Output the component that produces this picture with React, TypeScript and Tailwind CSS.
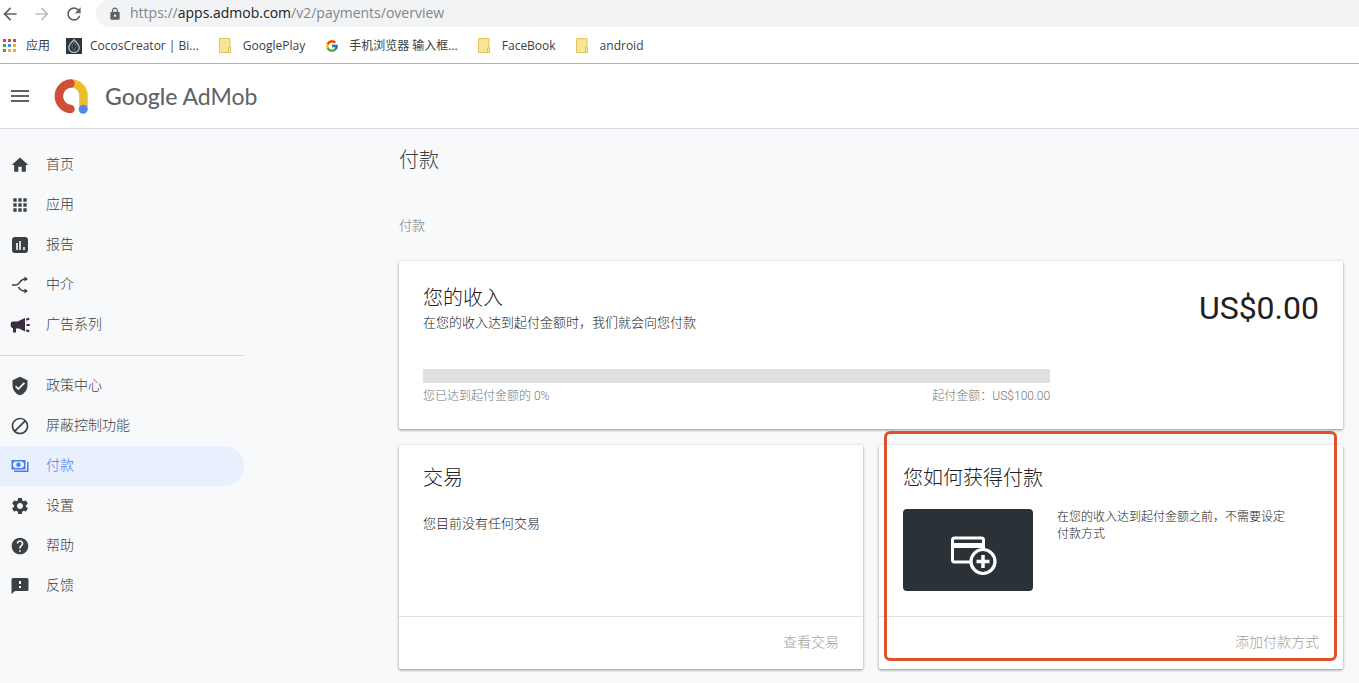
import type { ReactNode } from "react";
import {
  MdApps,
  MdArrowBack,
  MdArrowForward,
  MdBlock,
  MdHelp,
  MdHome,
  MdLock,
  MdMenu,
  MdRefresh,
  MdSettings,
  MdVerifiedUser,
} from "react-icons/md";
import { FcGoogle } from "react-icons/fc";

function ReportIcon() {
  return (
    <svg width={20} height={20} viewBox="0 0 20 20">
      <rect x="2" y="2" width="16" height="16" rx="3" fill="currentColor" />
      <path d="M7 8v7M10 6v9M14 12v3" stroke="#f8f9fb" strokeWidth="1.6" />
    </svg>
  );
}

function MediationIcon() {
  return (
    <svg width={20} height={20} viewBox="0 0 20 20" fill="none" stroke="currentColor" strokeWidth="1.6">
      <path d="M2 10h4c4 0 3.500-6 9-6M8.500 12c1.200 2.500 2.500 4 6.500 4" />
      <path d="M14.500 1.500L18 4l-3.500 2.500zM14.500 13.500L18 16l-3.500 2.500z" fill="currentColor" stroke="none" />
    </svg>
  );
}

function CampaignIcon() {
  return (
    <svg width={20} height={20} viewBox="0 0 20 20" fill="#3a2d40">
      <path d="M3 6.500h4.500L15 3v13.500l-6-3H6v4H3v-4.200A3 3 0 0 1 .7 11V8.800A2.300 2.300 0 0 1 3 6.500z" />
      <path d="M16.200 4.800l3-1.300M16.500 10h3.200M16.200 15.200l3 1.300" stroke="#3a2d40" strokeWidth="2" />
    </svg>
  );
}

function PaymentsIcon() {
  return (
    <svg width={20} height={20} viewBox="0 0 20 20" fill="currentColor">
      <path
        fillRule="evenodd"
        d="M1.500 4h14v9.500h-14zM4.500 5.500A1.800 1.800 0 0 1 3 7v3.500A1.800 1.800 0 0 1 4.500 12h8a1.800 1.800 0 0 1 1.500-1.500V7a1.800 1.800 0 0 1-1.500-1.500z"
      />
      <circle cx="8.500" cy="8.700" r="2.200" />
      <path d="M17 6h1.500v10H4v-1.500h13z" />
    </svg>
  );
}

function FeedbackIcon() {
  return (
    <svg width={20} height={20} viewBox="0 0 20 20">
      <path d="M3 2h14a1.500 1.500 0 0 1 1.500 1.500v10A1.500 1.500 0 0 1 17 15H5l-3.500 3V3.500A1.500 1.500 0 0 1 3 2z" fill="currentColor" />
      <path d="M9 5h2v3H9zM9 10h2v2H9z" fill="#f8f9fb" />
    </svg>
  );
}

function AppsColorIcon() {
  const colors = ["#db4437", "#db4437", "#db4437", "#4a9c5a", "#4285f4", "#e8b12d", "#4a9c5a", "#e8b12d", "#e8b12d"];
  return (
    <svg width={13} height={13} viewBox="0 0 13 13">
      {colors.map((color, i) => (
        <rect key={i} x={(i % 3) * 5} y={Math.floor(i / 3) * 5} width="3" height="3" fill={color} />
      ))}
    </svg>
  );
}

function CocosIcon() {
  return (
    <svg width={16} height={16} viewBox="0 0 16 16" fill="none">
      <rect width="16" height="16" fill="#2f363c" />
      <path d="M8 1.500C6 4 2.800 6.500 2.800 9.500c0 3 2.400 5 5.200 5s5.200-2 5.200-5C13.200 6.500 10 4 8 1.500z" stroke="#c9ced1" strokeWidth="1.200" />
      <path d="M8 3L5.800 8.500 8 12.500l2.200-4z" stroke="#8e969b" strokeWidth=".5" />
    </svg>
  );
}

function FolderIcon() {
  return (
    <svg width={13} height={15} viewBox="0 0 13 15">
      <path d="M.5.500h10.500v14H.500z" fill="#f8e698" stroke="#e3c65b" />
      <path d="M9.500 9.500h2v5h-2z" fill="#f8e698" stroke="#e3c65b" />
    </svg>
  );
}

function AdMobLogo() {
  return (
    <svg width={36} height={36} viewBox="0 0 36 36" fill="none">
      <path d="M18 5.500C25.500 5.500 30.500 11 30.500 18V31" stroke="#ecbd2c" strokeWidth="8.500" />
      <path d="M17.500 5.500a12.800 12.800 0 0 0 0 25.500" stroke="#cf4f3a" strokeWidth="8.500" strokeLinecap="round" />
      <circle cx="30.200" cy="31.200" r="4.500" fill="#5586f0" />
    </svg>
  );
}

function AddCardIcon() {
  return (
    <svg width={48} height={42} viewBox="0 0 48 42" fill="none" stroke="#fff">
      <rect x="2.500" y="3" width="31" height="24" rx="2" strokeWidth="3" />
      <path d="M2 10.500h32" strokeWidth="5" />
      <circle cx="33" cy="26.500" r="12" fill="#2a3238" strokeWidth="3.200" />
      <path d="M33 20v13M26.500 26.500h13" strokeWidth="3.500" />
    </svg>
  );
}

type Item = { label: string; icon: ReactNode; active?: boolean };

const bookmarks: Item[] = [
  { label: "CocosCreator | Bi...", icon: <CocosIcon /> },
  { label: "GooglePlay", icon: <FolderIcon /> },
  { label: "手机浏览器 输入框...", icon: <FcGoogle size={14} /> },
  { label: "FaceBook", icon: <FolderIcon /> },
  { label: "android", icon: <FolderIcon /> },
];

const mainItems: Item[] = [
  { label: "首页", icon: <MdHome size={20} /> },
  { label: "应用", icon: <MdApps size={20} /> },
  { label: "报告", icon: <ReportIcon /> },
  { label: "中介", icon: <MediationIcon /> },
  { label: "广告系列", icon: <CampaignIcon /> },
];

const moreItems: Item[] = [
  { label: "政策中心", icon: <MdVerifiedUser size={20} /> },
  { label: "屏蔽控制功能", icon: <MdBlock size={20} /> },
  { label: "付款", icon: <PaymentsIcon />, active: true },
  { label: "设置", icon: <MdSettings size={20} /> },
  { label: "帮助", icon: <MdHelp size={20} /> },
  { label: "反馈", icon: <FeedbackIcon /> },
];

function BrowserBar() {
  return (
    <div className="border-b border-[#b3b4b6] bg-white font-['Open_Sans','Noto_Sans_CJK_SC',sans-serif] font-normal">
      <div className="flex h-[27px] items-center">
        <div className="flex w-24 items-center gap-3 text-[#5f6368]">
          <button aria-label="Back"><MdArrowBack size={20} /></button>
          <button aria-label="Forward" className="text-[#bcbec1]"><MdArrowForward size={20} /></button>
          <button aria-label="Reload"><MdRefresh size={20} /></button>
        </div>
        <div className="flex h-full flex-1 items-center gap-2 rounded-l-full bg-[#f1f3f4] pl-3 text-[#5f6368]">
          <MdLock size={14} />
          <div className="pb-0.5 text-[14px] text-[#80868b]">
            https://<span className="text-[#202124]">apps.admob.com</span>/v2/payments/overview
          </div>
        </div>
      </div>
      <div className="flex h-9 items-center gap-5 pt-px pl-[3px] text-xs text-[#3c4043]">
        <a href="#" className="-mr-1 flex items-center gap-2.5">
          <AppsColorIcon />
          应用
        </a>
        {bookmarks.map((item) => (
          <a key={item.label} href="#" className="flex items-center gap-2 whitespace-nowrap">
            <span className="w-4">{item.icon}</span>
            {item.label}
          </a>
        ))}
      </div>
    </div>
  );
}

function NavList({ items }: { items: Item[] }) {
  return (
    <ul>
      {items.map((item) => (
        <li key={item.label}>
          <a
            href="#"
            className={`flex h-10 items-center gap-4 rounded-r-full pl-[10px] text-sm ${
              item.active ? "bg-[#e8effd] text-[#4a7ce8]" : "text-[#3c4043]"
            }`}
          >
            {item.icon}
            <span className="pb-0.5">{item.label}</span>
          </a>
        </li>
      ))}
    </ul>
  );
}

function Card({ title, action, children }: { title: string; action: string; children: ReactNode }) {
  return (
    <section className="flex min-h-56 flex-col rounded-xs bg-white shadow-[0_1px_3px_rgba(0,0,0,0.45)]">
      <div className="flex-1 px-6 pt-[19px]">
        <h2 className="text-xl leading-7">{title}</h2>
        {children}
      </div>
      <div className="flex h-[53px] items-center justify-end border-t border-[#e0e0e0] px-6 pb-0.5">
        <button className="text-sm text-[#9e9e9e]">{action}</button>
      </div>
    </section>
  );
}

export default function App() {
  return (
    <div className="flex min-h-screen flex-col bg-[#f8f9fb] font-['Roboto','Noto_Sans_CJK_SC',sans-serif] font-light text-[#212121]">
      <BrowserBar />
      <header className="flex h-[65px] items-center border-b border-[#dadce0] bg-white pl-2">
        <button aria-label="Menu" className="text-[#5f6368]">
          <MdMenu size={24} />
        </button>
        <a href="#" className="flex items-center gap-4 pl-[21px] text-[#5f6368]">
          <AdMobLogo />
          <span className="font-['Lato',sans-serif] text-[23px] font-normal">
            <span className="font-medium">Google</span> AdMob
          </span>
        </a>
      </header>
      <div className="flex flex-1">
        <nav className="w-[244px] shrink-0 pt-4">
          <NavList items={mainItems} />
          <hr className="my-[10px] border-[#dadce0]" />
          <NavList items={moreItems} />
        </nav>
        <main className="min-w-0 flex-1 pr-4 pb-3 pl-[155px]">
          <h1 className="pt-[15px] text-xl leading-8 text-[#3c4043]">付款</h1>
          <p className="pt-10 text-[13px] leading-5 text-[#757575]">付款</p>
          <section className="mt-[25px] flex min-h-[168px] justify-between rounded-xs bg-white px-6 pt-[23px] shadow-[0_1px_3px_rgba(0,0,0,0.45)]">
            <div className="w-[70%]">
              <h2 className="text-xl leading-7">您的收入</h2>
              <p className="text-[13px] leading-[22px]">在您的收入达到起付金额时，我们就会向您付款</p>
              <div role="progressbar" aria-label="起付金额" aria-valuenow={0} className="mt-[35px] h-[14px] bg-[#e0e0e0]" />
              <div className="flex justify-between pt-[5px] text-xs leading-4 text-[#757575]">
                <span>您已达到起付金额的 0%</span>
                <span>起付金额：US$100.00</span>
              </div>
            </div>
            <div className="pt-1 text-[32px] leading-10 font-normal">US$0.00</div>
          </section>
          <div className="mt-4 grid grid-cols-2 gap-4">
            <Card title="交易" action="查看交易">
              <p className="pt-[22px] text-[13px] leading-5">您目前没有任何交易</p>
            </Card>
            <div className="relative">
              <Card title="您如何获得付款" action="添加付款方式">
                <div className="flex gap-6 pt-[17px]">
                  <div className="flex h-[82px] w-[130px] shrink-0 items-center justify-center rounded-sm bg-[#2a3238] pt-3 pl-3">
                    <AddCardIcon />
                  </div>
                  <p className="max-w-[232px] text-xs leading-[17px]">在您的收入达到起付金额之前，不需要设定付款方式</p>
                </div>
              </Card>
              <div className="pointer-events-none absolute -top-[14px] right-[6px] bottom-2 left-[5px] rounded-md border-3 border-[#e2502a]" />
            </div>
          </div>
        </main>
      </div>
    </div>
  );
}
